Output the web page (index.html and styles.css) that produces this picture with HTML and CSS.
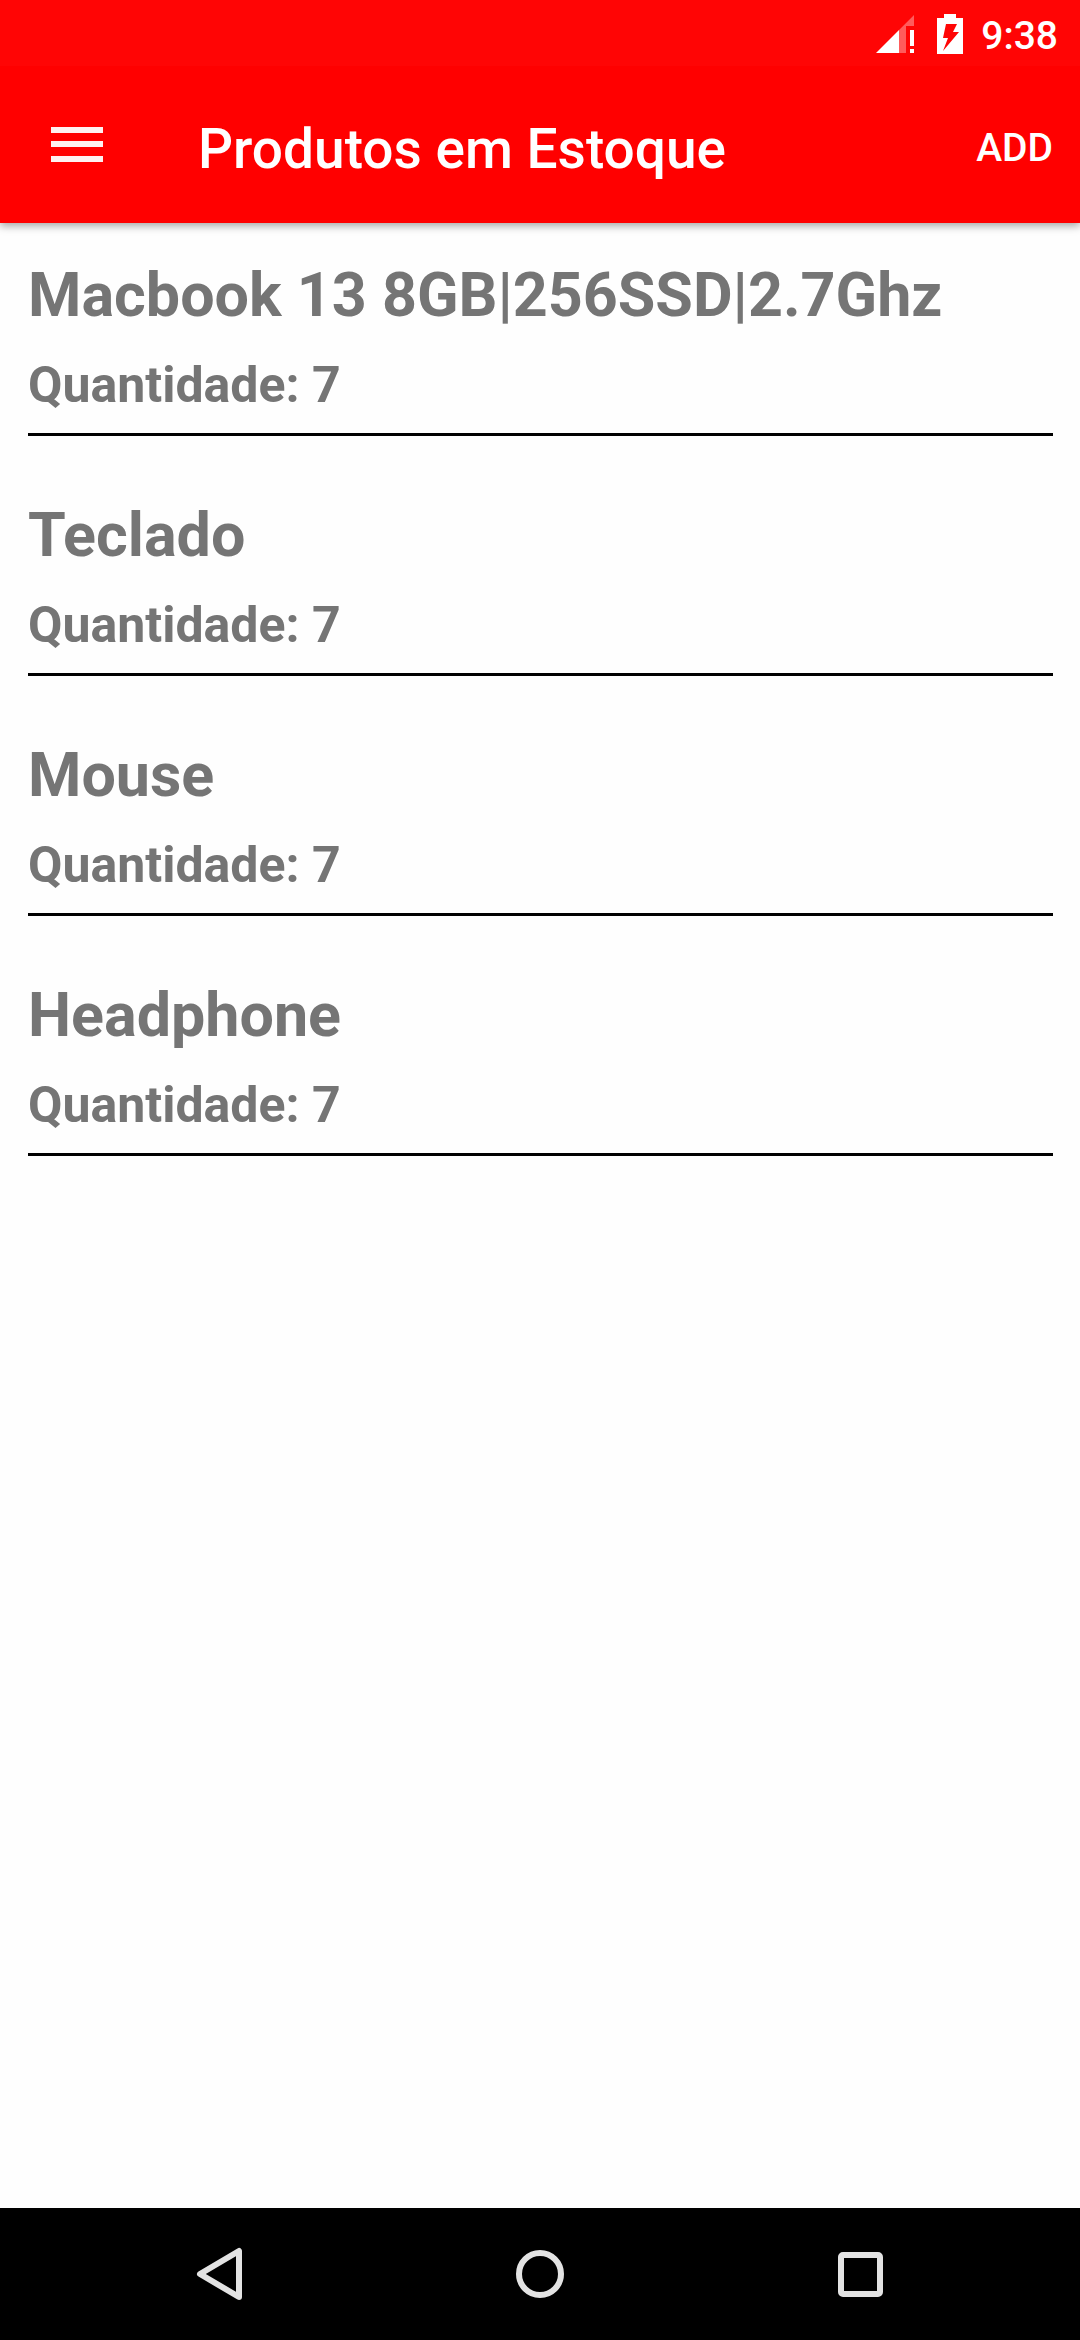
FILE: index.html
```html
<!DOCTYPE html>
<html lang="pt-BR">
<head>
  <meta charset="utf-8">
  <meta name="viewport" content="width=device-width, initial-scale=1">
  <title>Produtos em Estoque</title>
  <link rel="stylesheet" href="styles.css">
</head>
<body>
  <div class="screen">
    <header class="header">
      <div class="status-bar">
        <svg class="signal" viewBox="0 0 38 38" aria-hidden="true">
          <path fill="#fff" d="M0 38 23 15V38Z"/>
          <path fill="#fff" fill-opacity=".35" d="M23 15 38 0V11H30V38H23Z"/>
          <path fill="#fff" d="M34 15h4v16h-4zM34 34h4v4h-4z"/>
        </svg>
        <svg class="battery" viewBox="0 0 26 40" aria-hidden="true">
          <path fill="#fff" fill-rule="evenodd" d="M7 0h12v4h7v36H0V4h7zM9 10 6 24h5L6 37 22 18h-6l4-8z"/>
        </svg>
        <time class="clock">9:38</time>
      </div>
      <div class="toolbar">
        <button class="menu-button" type="button" aria-label="Menu">
          <svg class="menu-icon" viewBox="0 0 52 36" aria-hidden="true">
            <path fill="#fff" fill-opacity=".94" d="M0 0h52v6H0zM0 14h52v6H0zM0 29h52v6H0z"/>
          </svg>
        </button>
        <h1 class="title">Produtos em Estoque</h1>
        <button class="add-button" type="button">ADD</button>
      </div>
    </header>

    <main class="content">
      <ul class="products">
        <li class="product">
          <h2 class="product-name">Macbook 13 8GB|256SSD|2.7Ghz</h2>
          <p class="product-quantity">Quantidade: 7</p>
        </li>
        <li class="product">
          <h2 class="product-name">Teclado</h2>
          <p class="product-quantity">Quantidade: 7</p>
        </li>
        <li class="product">
          <h2 class="product-name">Mouse</h2>
          <p class="product-quantity">Quantidade: 7</p>
        </li>
        <li class="product">
          <h2 class="product-name">Headphone</h2>
          <p class="product-quantity">Quantidade: 7</p>
        </li>
      </ul>
    </main>

    <nav class="nav-bar" aria-label="Sistema">
      <button class="nav-button" type="button" aria-label="Voltar">
        <svg class="nav-icon" viewBox="0 0 54 54" aria-hidden="true">
          <path d="M46 4V50L7 27Z"/>
        </svg>
      </button>
      <button class="nav-button" type="button" aria-label="Início">
        <svg class="nav-icon" viewBox="0 0 54 54" aria-hidden="true">
          <circle cx="27" cy="27" r="21"/>
        </svg>
      </button>
      <button class="nav-button" type="button" aria-label="Recentes">
        <svg class="nav-icon" viewBox="0 0 54 54" aria-hidden="true">
          <rect x="8" y="8" width="39" height="39" rx="2"/>
        </svg>
      </button>
    </nav>
  </div>
</body>
</html>
```
FILE: styles.css
```css
* {
  box-sizing: border-box;
}

body {
  margin: 0;
  background: #fefefe;
  color: #757575;
  font-family: Roboto, sans-serif;
}

h1,
h2,
p,
ul {
  margin: 0;
  padding: 0;
}

button {
  padding: 0;
  border: 0;
  background: none;
  color: inherit;
  font: inherit;
}

svg {
  display: block;
}

.screen {
  display: flex;
  flex-direction: column;
  min-height: 100vh;
}

.header {
  background: #f00;
  color: #fff;
  box-shadow: 0 3px 8px rgba(0, 0, 0, 0.35);
}

.status-bar {
  display: flex;
  align-items: center;
  justify-content: flex-end;
  height: 66px;
  padding: 2px 22px 0 0;
  background: #ff0505;
}

.signal {
  width: 38px;
  height: 38px;
}

.battery {
  width: 26px;
  height: 40px;
  margin-left: 23px;
}

.clock {
  margin-left: 18px;
  padding-top: 4px;
  font-size: 39px;
  font-weight: 500;
  line-height: 46px;
}

.toolbar {
  display: flex;
  align-items: center;
  height: 157px;
  padding: 8px 27px 0 0;
}

.menu-button {
  display: flex;
  justify-content: center;
  width: 154px;
  padding-bottom: 8px;
}

.menu-icon {
  width: 52px;
  height: 36px;
}

.title {
  flex: 1;
  margin-left: 44px;
  font-size: 55px;
  font-weight: 500;
  line-height: 64px;
}

.add-button {
  padding-bottom: 2px;
  font-size: 39px;
  font-weight: 500;
  line-height: 46px;
}

.content {
  flex: 1;
  padding: 0 27px 0 28px;
}

.products {
  list-style: none;
}

.product {
  margin-bottom: 27px;
  padding: 36px 0 19px;
  border-bottom: 3px solid #000;
}

.product-name {
  font-size: 61px;
  font-weight: 700;
  line-height: 72px;
}

.product-quantity {
  margin-top: 25px;
  font-size: 50px;
  font-weight: 700;
  line-height: 58px;
}

.nav-bar {
  display: grid;
  grid-template-columns: repeat(3, 1fr);
  height: 132px;
  padding: 0 60px;
  background: #000;
}

.nav-button {
  display: flex;
  align-items: center;
  justify-content: center;
}

.nav-icon {
  width: 54px;
  height: 54px;
  fill: none;
  stroke: #e3e3e3;
  stroke-width: 6;
  stroke-linejoin: round;
}
```
